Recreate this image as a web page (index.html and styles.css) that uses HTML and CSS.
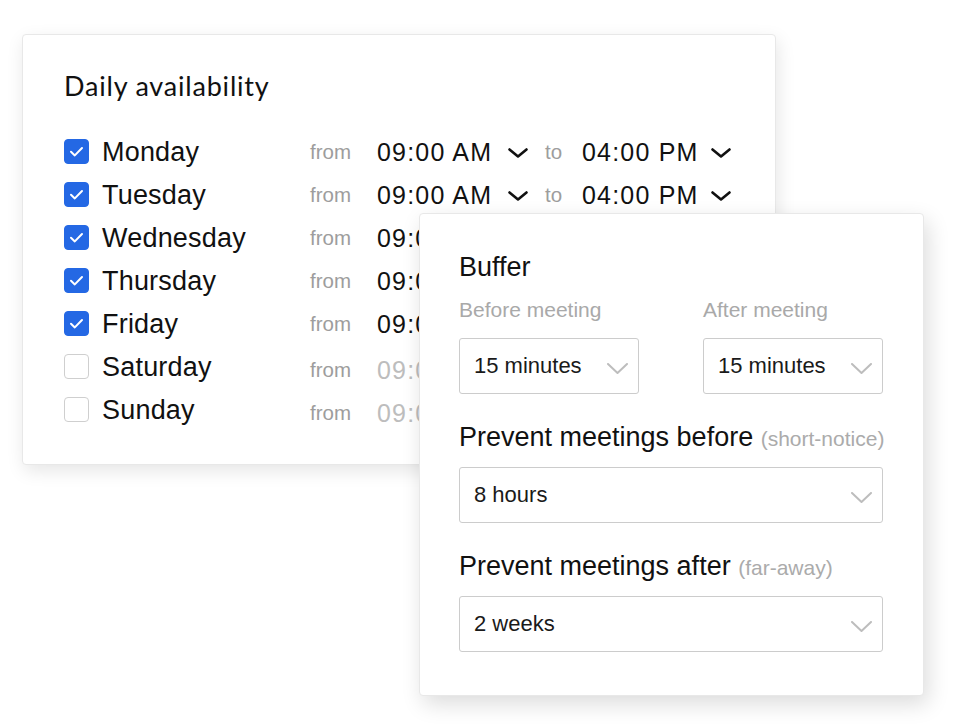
FILE: index.html
```html
<!DOCTYPE html>
<html lang="en">
<head>
<meta charset="utf-8">
<title>Availability settings</title>
<link rel="stylesheet" href="styles.css">
</head>
<body>
<div class="stage">
  <section class="card availability">
    <h2 class="title">Daily availability</h2>
    <div class="days">
      <div class="day">
        <span class="check on"><svg viewBox="0 0 25 25"><path d="M7 12.8 L10.8 16.4 L18 9"/></svg></span>
        <span class="name">Monday</span>
        <span class="muted">from</span>
        <span class="time">09:00 AM</span>
        <svg class="chev" viewBox="0 0 20 10"><path d="M1.5 1.5 L10 8.5 L18.5 1.5"/></svg>
        <span class="muted to">to</span>
        <span class="time">04:00 PM</span>
        <svg class="chev" viewBox="0 0 20 10"><path d="M1.5 1.5 L10 8.5 L18.5 1.5"/></svg>
      </div>
      <div class="day">
        <span class="check on"><svg viewBox="0 0 25 25"><path d="M7 12.8 L10.8 16.4 L18 9"/></svg></span>
        <span class="name">Tuesday</span>
        <span class="muted">from</span>
        <span class="time">09:00 AM</span>
        <svg class="chev" viewBox="0 0 20 10"><path d="M1.5 1.5 L10 8.5 L18.5 1.5"/></svg>
        <span class="muted to">to</span>
        <span class="time">04:00 PM</span>
        <svg class="chev" viewBox="0 0 20 10"><path d="M1.5 1.5 L10 8.5 L18.5 1.5"/></svg>
      </div>
      <div class="day">
        <span class="check on"><svg viewBox="0 0 25 25"><path d="M7 12.8 L10.8 16.4 L18 9"/></svg></span>
        <span class="name">Wednesday</span>
        <span class="muted">from</span>
        <span class="time">09:00 AM</span>
        <svg class="chev" viewBox="0 0 20 10"><path d="M1.5 1.5 L10 8.5 L18.5 1.5"/></svg>
        <span class="muted to">to</span>
        <span class="time">04:00 PM</span>
        <svg class="chev" viewBox="0 0 20 10"><path d="M1.5 1.5 L10 8.5 L18.5 1.5"/></svg>
      </div>
      <div class="day">
        <span class="check on"><svg viewBox="0 0 25 25"><path d="M7 12.8 L10.8 16.4 L18 9"/></svg></span>
        <span class="name">Thursday</span>
        <span class="muted">from</span>
        <span class="time">09:00 AM</span>
        <svg class="chev" viewBox="0 0 20 10"><path d="M1.5 1.5 L10 8.5 L18.5 1.5"/></svg>
        <span class="muted to">to</span>
        <span class="time">04:00 PM</span>
        <svg class="chev" viewBox="0 0 20 10"><path d="M1.5 1.5 L10 8.5 L18.5 1.5"/></svg>
      </div>
      <div class="day">
        <span class="check on"><svg viewBox="0 0 25 25"><path d="M7 12.8 L10.8 16.4 L18 9"/></svg></span>
        <span class="name">Friday</span>
        <span class="muted">from</span>
        <span class="time">09:00 AM</span>
        <svg class="chev" viewBox="0 0 20 10"><path d="M1.5 1.5 L10 8.5 L18.5 1.5"/></svg>
        <span class="muted to">to</span>
        <span class="time">04:00 PM</span>
        <svg class="chev" viewBox="0 0 20 10"><path d="M1.5 1.5 L10 8.5 L18.5 1.5"/></svg>
      </div>
      <div class="day off">
        <span class="check"></span>
        <span class="name">Saturday</span>
        <span class="muted">from</span>
        <span class="time">09:00 AM</span>
        <svg class="chev" viewBox="0 0 20 10"><path d="M1.5 1.5 L10 8.5 L18.5 1.5"/></svg>
        <span class="muted to">to</span>
        <span class="time">04:00 PM</span>
        <svg class="chev" viewBox="0 0 20 10"><path d="M1.5 1.5 L10 8.5 L18.5 1.5"/></svg>
      </div>
      <div class="day off">
        <span class="check"></span>
        <span class="name">Sunday</span>
        <span class="muted">from</span>
        <span class="time">09:00 AM</span>
        <svg class="chev" viewBox="0 0 20 10"><path d="M1.5 1.5 L10 8.5 L18.5 1.5"/></svg>
        <span class="muted to">to</span>
        <span class="time">04:00 PM</span>
        <svg class="chev" viewBox="0 0 20 10"><path d="M1.5 1.5 L10 8.5 L18.5 1.5"/></svg>
      </div>
    </div>
  </section>

  <section class="card limits">
    <h3 class="heading">Buffer</h3>
    <div class="pair">
      <div class="field">
        <div class="label">Before meeting</div>
        <div class="select"><span>15 minutes</span><svg class="gchev" viewBox="0 0 21 11"><path d="M1 1 L10.5 10 L20 1"/></svg></div>
      </div>
      <div class="field">
        <div class="label">After meeting</div>
        <div class="select"><span>15 minutes</span><svg class="gchev" viewBox="0 0 21 11"><path d="M1 1 L10.5 10 L20 1"/></svg></div>
      </div>
    </div>
    <h3 class="heading spaced">Prevent meetings before <span class="hint">(short-notice)</span></h3>
    <div class="select"><span>8 hours</span><svg class="gchev" viewBox="0 0 21 11"><path d="M1 1 L10.5 10 L20 1"/></svg></div>
    <h3 class="heading spaced">Prevent meetings after <span class="hint">(far-away)</span></h3>
    <div class="select"><span>2 weeks</span><svg class="gchev" viewBox="0 0 21 11"><path d="M1 1 L10.5 10 L20 1"/></svg></div>
  </section>
</div>
</body>
</html>
```

FILE: styles.css
```css
* { box-sizing: border-box; }

html, body {
  margin: 0;
  padding: 0;
  background: #ffffff;
}

body {
  font-family: "Liberation Sans", Arial, sans-serif;
  color: #111111;
  width: 955px;
  height: 728px;
  overflow: hidden;
}

.stage {
  position: relative;
  width: 955px;
  height: 728px;
  padding: 34px 0 0 22px;
}

.card {
  background: #ffffff;
  border: 1px solid #e8e8e8;
  border-radius: 4px;
}

.availability {
  width: 754px;
  height: 431px;
  padding: 35px 0 0 41px;
  box-shadow: 2px 6px 18px rgba(0, 0, 0, 0.10);
  overflow: hidden;
}

.title {
  margin: 0;
  font-family: "Lato", "Liberation Sans", sans-serif;
  font-weight: 400;
  font-size: 27px;
  line-height: 32px;
  color: #111111;
  letter-spacing: 0.8px;
}

.days {
  margin-top: 28px;
  display: flex;
  flex-direction: column;
}

.day {
  height: 43px;
  display: grid;
  grid-template-columns: 38px 208px 67px 131px 37px 37px 129px 20px;
  align-items: center;
}

.check {
  width: 25px;
  height: 25px;
  border-radius: 4px;
  border: 1px solid #cfcfcf;
  background: #ffffff;
  display: block;
}

.check.on {
  background: #2468e4;
  border-color: #2468e4;
}

.check svg {
  display: block;
  width: 25px;
  height: 25px;
  margin: -1px;
}

.check svg path {
  fill: none;
  stroke: #ffffff;
  stroke-width: 2;
  stroke-linecap: round;
  stroke-linejoin: round;
}

.name {
  font-size: 27px;
  line-height: 32px;
  letter-spacing: 0.2px;
  color: #111111;
}

.muted {
  font-size: 20.5px;
  line-height: 26px;
  color: #9d9d9d;
}

.time {
  font-size: 25px;
  line-height: 32px;
  letter-spacing: 1.2px;
  color: #111111;
  white-space: nowrap;
}

.chev {
  width: 20px;
  height: 10px;
  display: block;
  margin-top: 3px;
}

.chev path {
  fill: none;
  stroke: #111111;
  stroke-width: 2.6;
  stroke-linecap: round;
  stroke-linejoin: round;
}

.day.off .muted,
.day.off .time {
  margin-top: 6px;
}

.day.off .time {
  color: #bdbdbd;
}

.day.off .chev path {
  stroke: #bdbdbd;
}

.limits {
  position: absolute;
  left: 419px;
  top: 213px;
  width: 505px;
  height: 483px;
  padding: 37px 40px 0 39px;
  box-shadow: 4px 8px 22px rgba(0, 0, 0, 0.14);
}

.heading {
  margin: 0;
  font-weight: 400;
  font-size: 27px;
  line-height: 32px;
  color: #111111;
  white-space: nowrap;
}

.heading.spaced {
  margin-top: 27px;
  margin-bottom: 12px;
}

.hint {
  font-size: 21px;
  color: #ababab;
}

.pair {
  display: flex;
  justify-content: space-between;
  margin-top: 14px;
}

.field {
  width: 180px;
}

.label {
  font-size: 21px;
  line-height: 26px;
  color: #a9a9a9;
  margin-bottom: 15px;
}

.select {
  height: 56px;
  border: 1px solid #cccccc;
  border-radius: 3px;
  display: flex;
  align-items: center;
  justify-content: space-between;
  padding: 0 10px 0 14px;
  font-size: 22px;
  color: #1a1a1a;
}

.gchev {
  width: 21px;
  height: 11px;
  display: block;
  margin-top: 4px;
}

.gchev path {
  fill: none;
  stroke: #bdbdbd;
  stroke-width: 2;
  stroke-linecap: round;
  stroke-linejoin: round;
}
```
